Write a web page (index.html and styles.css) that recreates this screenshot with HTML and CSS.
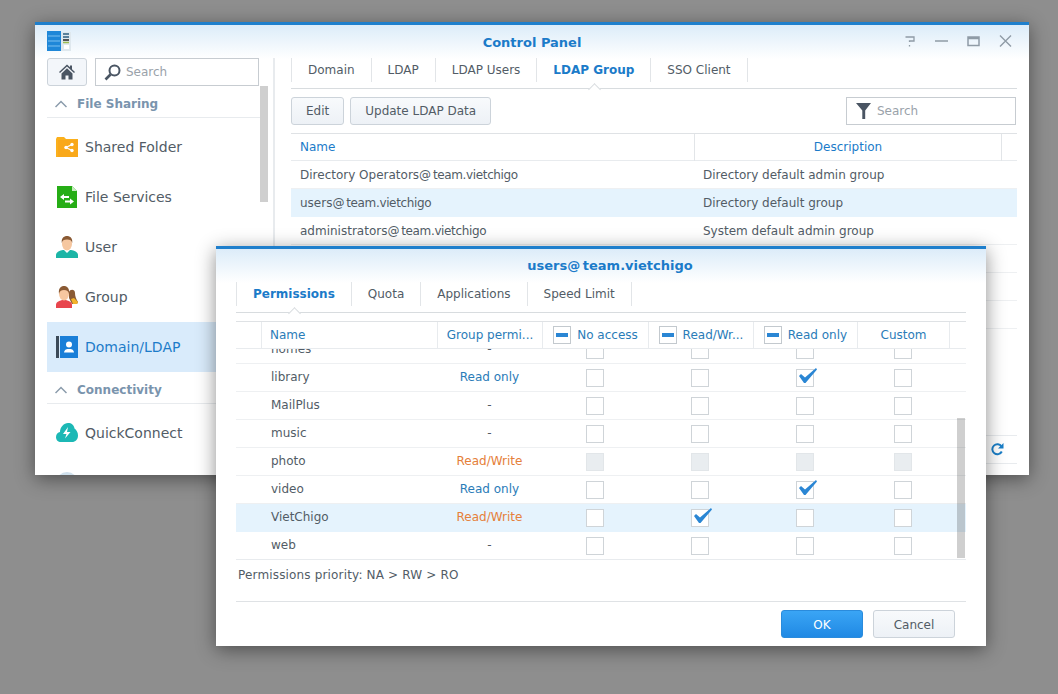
FILE: index.html
```html
<!DOCTYPE html>
<html>
<head>
  <meta charset="UTF-8"/>
  <title>Control Panel</title>
  <link rel="stylesheet" href="styles.css">
</head>
<body>

<div class="window main">
  <div class="titlebar">
    <svg class="logo" width="24" height="20" viewBox="0 0 24 20">
      <rect x="0" y="0" width="14" height="20" fill="#1f87d8"/>
      <rect x="14" y="1" width="10" height="19" fill="#dfe8ee"/>
      <path d="M1 5h12M1 10h12M1 15h12" stroke="#7cc0f0" stroke-width="1"/>
      <path d="M16 3h6M16 6h6" stroke="#2f5f80" stroke-width="1.5"/>
      <path d="M16 9h6" stroke="#222" stroke-width="1.5"/>
      <path d="M16 11.500h6" stroke="#9bbb50" stroke-width="1.500"/>
      <rect x="17" y="14" width="5" height="4" fill="#fff"/>
    </svg>
    <div class="title">Control Panel</div>
    <div class="controls">
      <svg width="12" height="12" viewBox="0 0 12 12"><path d="M1.500 2h8.500v4H5.500v1M5.500 10v1.500" fill="none" stroke="#8f9ba6" stroke-width="1.300"/></svg>
      <svg width="13" height="12" viewBox="0 0 13 12"><path d="M0 6h13" stroke="#8f9ba6" stroke-width="1.500"/></svg>
      <svg width="13" height="12" viewBox="0 0 13 12"><path d="M1 2h11v8.500H1zM1 3.500h11" fill="none" stroke="#8f9ba6" stroke-width="1.500"/></svg>
      <svg width="13" height="12" viewBox="0 0 13 12"><path d="M1 .5l11 11M12 .5l-11 11" stroke="#8f9ba6" stroke-width="1.400"/></svg>
    </div>
  </div>

  <div class="panel">
    <div class="sidebar">
      <div class="side-top">
        <div class="home-btn">
          <svg width="16" height="16" viewBox="0 0 16 16"><path d="M8 .5L0 8l1 1 7-6.500L15 9l1-1-3-2.800V1.500h-2v1.800zM2.500 9.500L8 4.300l5.500 5.200V15.500H9.500v-4h-3v4H2.500z" fill="#4a5563"/></svg>
        </div>
        <div class="side-search">
          <svg width="17" height="17" viewBox="0 0 17 17"><circle cx="10.500" cy="6.500" r="5" fill="none" stroke="#4a5563" stroke-width="2"/><path d="M6.500 10.500L1.500 15.500" stroke="#4a5563" stroke-width="2.600"/></svg>
          <span>Search</span>
        </div>
      </div>
      <div class="side-group">
        <svg width="12" height="8" viewBox="0 0 12 8"><path d="M.5 7L6 1.500 11.500 7" fill="none" stroke="#8a9bab" stroke-width="1.500"/></svg>
        File Sharing
      </div>
      <div class="side-item">
        <svg width="22" height="20" viewBox="0 0 22 20"><path d="M0 2l1-2h7l2 2h12v18H0z" fill="#fbb01c"/><path d="M2 3h20v17H2z" fill="#f9a81a"/><path d="M16 7.500l-6 3 6 3" fill="none" stroke="#fff" stroke-width="1.200"/><circle cx="16" cy="7.500" r="1.700" fill="#fff"/><circle cx="10" cy="10.500" r="1.700" fill="#fff"/><circle cx="16" cy="13.500" r="1.700" fill="#fff"/></svg>
        <span>Shared Folder</span>
      </div>
      <div class="side-item">
        <svg width="22" height="22" viewBox="0 0 22 22"><path d="M1 0h15l5 5v17H1z" fill="#26ad16"/><path d="M16 0l5 5h-5z" fill="#c8ecc0"/><path d="M4 11l4-3v2h5v2H8v2zM18 15.500l-4-3v2H9v2h5v2z" fill="#fff"/></svg>
        <span>File Services</span>
      </div>
      <div class="side-item">
        <svg width="22" height="22" viewBox="0 0 22 22"><path d="M0 22v-3c0-3 4-4.500 7-5h8c3 .5 7 2 7 5v3z" fill="#1cb5a6"/><path d="M8 14h6l-3 3z" fill="#fff"/><ellipse cx="11" cy="8" rx="5" ry="6.500" fill="#f6c7a0"/><path d="M5.800 7C5 1 9 0 11 0s6 1 5.200 7c-.5-2.500-2-3.500-5.200-3.500S6.300 4.500 5.800 7z" fill="#8a5a34"/></svg>
        <span>User</span>
      </div>
      <div class="side-item">
        <svg width="22" height="22" viewBox="0 0 22 22"><path d="M13 6c1-3 6-3 6 1 0 3 1 6 3 9l-1 2h-5l-3-6z" fill="#8a5a34"/><path d="M15 13l3-1 4 4-1 2h-4z" fill="#f3b32a"/><path d="M0 22v-3c0-3 3-4 6-5h4c3 1 6 2 6 5v3z" fill="#e8454d"/><ellipse cx="8" cy="8" rx="5" ry="6.500" fill="#f6c7a0"/><path d="M3 8C2 1 6 0 8 0s6 1 5 8c-.5-2.500-2-4-5-4S3.500 5.500 3 8z" fill="#8a5a34"/></svg>
        <span>Group</span>
      </div>
      <div class="side-item selected">
        <svg width="22" height="22" viewBox="0 0 22 22"><rect x="0" y="0" width="3" height="22" fill="#3c4a58"/><rect x="4" y="0" width="18" height="22" fill="#1a7fd8"/><circle cx="13" cy="8.500" r="3" fill="#fff"/><path d="M8 16.500c0-2.500 2.500-3.500 3.500-3.500h3c1 0 3.500 1 3.500 3.500z" fill="#fff"/></svg>
        <span>Domain/LDAP</span>
      </div>
      <div class="side-group">
        <svg width="12" height="8" viewBox="0 0 12 8"><path d="M.5 7L6 1.500 11.500 7" fill="none" stroke="#8a9bab" stroke-width="1.500"/></svg>
        Connectivity
      </div>
      <div class="side-item">
        <svg width="22" height="20" viewBox="0 0 22 20"><path d="M5 19C2 19 0 17 0 14s2-4.500 4-5C4 4 8 0 12 0c3.500 0 6 2 6.500 5.500C20.500 7 22 9.500 22 12.500 22 16.500 19.500 19 16 19z" fill="#1cb8b5"/><path d="M12 4l-5 7h3.500L9 15.500l5.500-6.500H11z" fill="#fff"/></svg>
        <span>QuickConnect</span>
      </div>
      <div class="side-item">
        <svg width="22" height="22" viewBox="0 0 22 22"><circle cx="11" cy="11" r="11" fill="#cfe0ec"/></svg>
        <span></span>
      </div>
      <div class="side-scroll"></div>
    </div>

    <div class="content">
      <div class="tabs">
        <div class="tab">Domain</div>
        <div class="tab">LDAP</div>
        <div class="tab">LDAP Users</div>
        <div class="tab active">LDAP Group</div>
        <div class="tab">SSO Client</div>
      </div>

      <div class="toolbar">
        <div class="btn">Edit</div>
        <div class="btn">Update LDAP Data</div>
        <div class="filter">
          <svg width="15" height="16" viewBox="0 0 15 16"><path d="M0 0h15L9.200 7.500V16H6.300V7.500z" fill="#4a5563"/></svg>
          <span>Search</span>
        </div>
      </div>

      <div class="list">
        <div class="list-head">
          <div class="col-name">Name</div>
          <div class="col-desc">Description</div>
          <div></div>
        </div>
        <div class="list-row"><div>Directory Operators@ <span class="dom">team.vietchigo</span></div><div>Directory default admin group</div></div>
        <div class="list-row selected"><div>users@ <span class="dom">team.vietchigo</span></div><div>Directory default group</div></div>
        <div class="list-row"><div>administrators@ <span class="dom">team.vietchigo</span></div><div>System default admin group</div></div>
        <div class="list-row"></div>
        <div class="list-row"></div>
        <div class="list-row"></div>
      </div>

      <div class="pager">
        <svg width="13" height="13" viewBox="0 0 13 13"><path d="M10.800 8.500A5 5 0 1 1 10.500 3.500" fill="none" stroke="#1a7fc8" stroke-width="2"/><path d="M12.500 0v5.500H7z" fill="#1a7fc8"/></svg>
      </div>
    </div>
  </div>
</div>

<div class="window dialog">
  <div class="dialog-title">users@ <span>team.vietchigo</span></div>
  <div class="tabs small">
    <div class="tab active">Permissions</div>
    <div class="tab">Quota</div>
    <div class="tab">Applications</div>
    <div class="tab">Speed Limit</div>
  </div>

  <div class="perm">
    <div class="perm-head">
      <div></div>
      <div class="cell-name">Name</div>
      <div class="cell-mid">Group permi...</div>
      <div class="cell-mid"><span class="box-minus"></span>No access</div>
      <div class="cell-mid"><span class="box-minus"></span>Read/Wr...</div>
      <div class="cell-mid"><span class="box-minus"></span>Read only</div>
      <div class="cell-mid">Custom</div>
      <div></div>
    </div>
    <div class="perm-rows">
      <div class="perm-row first"><div></div><div class="cell-name">homes</div><div class="cell-mid">-</div><div class="cell-mid"><span class="box"></span></div><div class="cell-mid"><span class="box"></span></div><div class="cell-mid"><span class="box"></span></div><div class="cell-mid"><span class="box"></span></div></div>
      <div class="perm-row"><div></div><div class="cell-name">library</div><div class="cell-mid ro">Read only</div><div class="cell-mid"><span class="box"></span></div><div class="cell-mid"><span class="box"></span></div><div class="cell-mid"><span class="box"><svg class="tick" width="20" height="16" viewBox="0 0 20 16"><path d="M1 8l2-2 4 3.500L18 0l1 1.500L7.500 15h-1.500z" fill="#2a86d4"/></svg></span></div><div class="cell-mid"><span class="box"></span></div></div>
      <div class="perm-row"><div></div><div class="cell-name">MailPlus</div><div class="cell-mid">-</div><div class="cell-mid"><span class="box"></span></div><div class="cell-mid"><span class="box"></span></div><div class="cell-mid"><span class="box"></span></div><div class="cell-mid"><span class="box"></span></div></div>
      <div class="perm-row"><div></div><div class="cell-name">music</div><div class="cell-mid">-</div><div class="cell-mid"><span class="box"></span></div><div class="cell-mid"><span class="box"></span></div><div class="cell-mid"><span class="box"></span></div><div class="cell-mid"><span class="box"></span></div></div>
      <div class="perm-row"><div></div><div class="cell-name">photo</div><div class="cell-mid rw">Read/Write</div><div class="cell-mid"><span class="box off"></span></div><div class="cell-mid"><span class="box off"></span></div><div class="cell-mid"><span class="box off"></span></div><div class="cell-mid"><span class="box off"></span></div></div>
      <div class="perm-row"><div></div><div class="cell-name">video</div><div class="cell-mid ro">Read only</div><div class="cell-mid"><span class="box"></span></div><div class="cell-mid"><span class="box"></span></div><div class="cell-mid"><span class="box"><svg class="tick" width="20" height="16" viewBox="0 0 20 16"><path d="M1 8l2-2 4 3.500L18 0l1 1.500L7.500 15h-1.500z" fill="#2a86d4"/></svg></span></div><div class="cell-mid"><span class="box"></span></div></div>
      <div class="perm-row selected"><div></div><div class="cell-name">VietChigo</div><div class="cell-mid rw">Read/Write</div><div class="cell-mid"><span class="box"></span></div><div class="cell-mid"><span class="box"><svg class="tick" width="20" height="16" viewBox="0 0 20 16"><path d="M1 8l2-2 4 3.500L18 0l1 1.500L7.500 15h-1.500z" fill="#2a86d4"/></svg></span></div><div class="cell-mid"><span class="box"></span></div><div class="cell-mid"><span class="box"></span></div></div>
      <div class="perm-row"><div></div><div class="cell-name">web</div><div class="cell-mid">-</div><div class="cell-mid"><span class="box"></span></div><div class="cell-mid"><span class="box"></span></div><div class="cell-mid"><span class="box"></span></div><div class="cell-mid"><span class="box"></span></div></div>
      <div class="perm-scroll"></div>
    </div>
  </div>

  <div class="note">Permissions priority: NA &gt; RW &gt; RO</div>

  <div class="dialog-foot">
    <div class="btn primary">OK</div>
    <div class="btn">Cancel</div>
  </div>
</div>

</body>
</html>
```

FILE: styles.css
```css
body {
  margin: 0;
  height: 694px;
  overflow: hidden;
  background: #8e8e8e;
  font-family: "DejaVu Sans", sans-serif;
  font-size: 12px;
  color: #525c66;
}

/* windows on the desktop */
.window {
  position: absolute;
  box-sizing: border-box;
  border-top: 3px solid #1f7fcc;
  background: linear-gradient(#dcecf9, #fff 34px);
  box-shadow: 0 4px 18px rgba(0, 0, 0, 0.45);
  overflow: hidden;
}
.main {
  left: 35px;
  top: 22px;
  width: 994px;
  height: 453px;
}
.dialog {
  left: 216px;
  top: 246px;
  width: 770px;
  height: 400px;
  padding: 0 20px;
}

.titlebar {
  height: 33px;
  display: flex;
  align-items: center;
  justify-content: center;
  position: relative;
}
.logo {
  position: absolute;
  left: 12px;
  top: 6px;
}
.title {
  font-size: 13px;
  font-weight: bold;
  color: #1b7bc9;
  padding-top: 1px;
}
.controls {
  position: absolute;
  right: 17px;
  top: 10px;
  display: flex;
  gap: 19px;
}

.panel {
  display: flex;
  height: 417px;
}

/* left menu */
.sidebar {
  position: relative;
  box-sizing: border-box;
  width: 240px;
  padding-left: 12px;
  padding-right: 7px;
  border-right: 2px solid #e8ebee;
}
.side-top {
  display: flex;
  gap: 8px;
  height: 28px;
}
.home-btn {
  box-sizing: border-box;
  width: 40px;
  border: 1px solid #ccd3da;
  border-radius: 3px;
  background: #f3f6fa;
  display: flex;
  align-items: center;
  justify-content: center;
}
.side-search {
  box-sizing: border-box;
  width: 164px;
  border: 1px solid #c7ccd1;
  background: #fff;
  display: flex;
  align-items: center;
  gap: 5px;
  padding-left: 8px;
  color: #9aa2aa;
}
.side-group {
  box-sizing: border-box;
  height: 32px;
  margin-bottom: 4px;
  padding-left: 8px;
  padding-top: 4px;
  border-bottom: 1px solid #e8ebee;
  display: flex;
  align-items: center;
  gap: 10px;
  font-weight: bold;
  color: #7a94ad;
}
.side-item {
  height: 50px;
  padding-left: 9px;
  display: flex;
  align-items: center;
  gap: 7px;
  font-size: 14px;
  color: #525c66;
}
.side-item svg {
  flex: none;
}
.side-item.selected {
  background: #d9ebfb;
  color: #1d7cc9;
}
.side-scroll {
  position: absolute;
  left: 225px;
  top: 28px;
  width: 8px;
  height: 116px;
  background: #cfcfcf;
}

/* right side */
.content {
  flex: 1;
  padding-left: 16px;
  padding-right: 12px;
}
.tabs {
  display: flex;
  height: 31px;
  border-bottom: 1px solid #d8dcdf;
  box-sizing: border-box;
}
.tab {
  position: relative;
  height: 24px;
  line-height: 24px;
  padding: 0 16px;
  border-right: 1px solid #e2e5e8;
  color: #525c66;
}
.tabs .tab:first-child {
  border-left: 1px solid #e2e5e8;
}
.tab.active {
  font-weight: bold;
  color: #1b7bc9;
}
.tab.active::after {
  content: "";
  position: absolute;
  left: 50%;
  bottom: -8px;
  width: 8px;
  height: 8px;
  margin-left: -4px;
  background: #fff;
  border-left: 1px solid #d8dcdf;
  border-top: 1px solid #d8dcdf;
  transform: translateY(4px) rotate(45deg);
}

.toolbar {
  display: flex;
  gap: 6px;
  margin-top: 8px;
}
.btn {
  box-sizing: border-box;
  height: 28px;
  line-height: 26px;
  padding: 0 14px;
  border: 1px solid #ccd3da;
  border-radius: 3px;
  background: linear-gradient(#f8fafc, #edf1f6);
  text-align: center;
  color: #525c66;
}
.filter {
  box-sizing: border-box;
  width: 170px;
  height: 28px;
  margin-left: auto;
  margin-right: 1px;
  border: 1px solid #c7ccd1;
  display: flex;
  align-items: center;
  gap: 6px;
  padding-left: 9px;
  color: #9aa2aa;
}

.list {
  margin-top: 8px;
  border-top: 1px solid #dfe2e5;
}
.list-head {
  display: grid;
  grid-template-columns: 404px 307px 1fr;
  height: 26px;
  line-height: 27px;
  border-bottom: 1px solid #e8ebee;
  color: #1b7bc9;
}
.col-name {
  padding-left: 9px;
  border-right: 1px solid #e2e5e8;
}
.col-desc {
  text-align: center;
  border-right: 1px solid #e2e5e8;
}
.list-row {
  display: grid;
  grid-template-columns: 404px 1fr;
  box-sizing: border-box;
  height: 28px;
  line-height: 29px;
  border-bottom: 1px solid #eef0f2;
}
.list-row > div {
  padding-left: 9px;
}
.list-row > div + div {
  padding-left: 8px;
}
.list-row.selected {
  background: #e5f3fd;
  border-bottom-color: #e5f3fd;
}
.dom {
  letter-spacing: -0.36px;
  margin-left: -2px;
}
.pager {
  margin-top: 106px;
  height: 27px;
  border-top: 1px solid #e8ebee;
  border-bottom: 1px solid #e8ebee;
  display: flex;
  align-items: center;
  justify-content: flex-end;
  padding-right: 13px;
}

/* permissions dialog */
.dialog-title {
  height: 33px;
  line-height: 33px;
  padding-left: 18px;
  text-align: center;
  font-size: 13px;
  font-weight: bold;
  color: #1b7bc9;
}
.dialog-title span {
  margin-left: -2px;
}
.tabs.small .tab {
  height: 24px;
}
.perm {
  margin-top: 8px;
  border-top: 1px solid #dfe2e5;
}
.perm-head,
.perm-row {
  display: grid;
}
.perm-head {
  grid-template-columns: 26px 176px 105px 106px 105px 104px 92px 16px;
  height: 26px;
  color: #2a7cb8;
  border-bottom: 1px solid #e8ebee;
}
.perm-head > div {
  border-right: 1px solid #e8ebee;
}
.perm-head > div:last-child {
  border-right: none;
}
.cell-name {
  display: flex;
  align-items: center;
  padding-left: 8px;
}
.perm-row .cell-name {
  padding-left: 10px;
}
.cell-mid {
  display: flex;
  align-items: center;
  justify-content: center;
}
.perm-rows {
  position: relative;
  height: 211px;
  overflow: hidden;
  border-bottom: 1px solid #e8ebee;
  box-sizing: border-box;
}
.perm-row {
  grid-template-columns: 25px 176px 105px 106px 104px 106px 90px;
  box-sizing: border-box;
  height: 28px;
  border-bottom: 1px solid #eef0f2;
}
.perm-row > div {
  padding-bottom: 2px;
}
.perm-row.first {
  margin-top: -13px;
}
.perm-row.selected {
  background: #e5f3fd;
  border-bottom-color: #e5f3fd;
}
.ro {
  color: #2a7cb8;
}
.rw {
  color: #e5803a;
}
.box {
  position: relative;
  box-sizing: border-box;
  width: 18px;
  height: 18px;
  margin-top: 2px;
  border: 1px solid #cfd4d8;
  background: #fff;
}
.box.off {
  background: #e9edf0;
  border-color: #e2e6e9;
}
.tick {
  position: absolute;
  left: 1px;
  top: -2px;
}
.box-minus {
  position: relative;
  box-sizing: border-box;
  width: 18px;
  height: 18px;
  margin-right: 6px;
  border: 1px solid #c3c9ce;
  background: #fff;
  flex: none;
}
.box-minus::after {
  content: "";
  position: absolute;
  left: 2px;
  top: 6px;
  width: 12px;
  height: 4px;
  background: #2a86d4;
}
.perm-scroll {
  position: absolute;
  left: 721px;
  top: 69px;
  width: 8px;
  height: 140px;
  background: rgba(0, 0, 0, 0.19);
}
.note {
  height: 41px;
  line-height: 30px;
  padding-left: 2px;
  letter-spacing: 0.16px;
  border-bottom: 1px solid #dfe2e5;
}
.dialog-foot {
  display: flex;
  justify-content: flex-end;
  gap: 10px;
  margin-top: 8px;
  padding-right: 11px;
}
.dialog-foot .btn {
  width: 82px;
  padding: 0;
  line-height: 28px;
}
.btn.primary {
  background: linear-gradient(#3aa5f5, #2089e4);
  border-color: #2a8bdc;
  color: #fff;
}
```
